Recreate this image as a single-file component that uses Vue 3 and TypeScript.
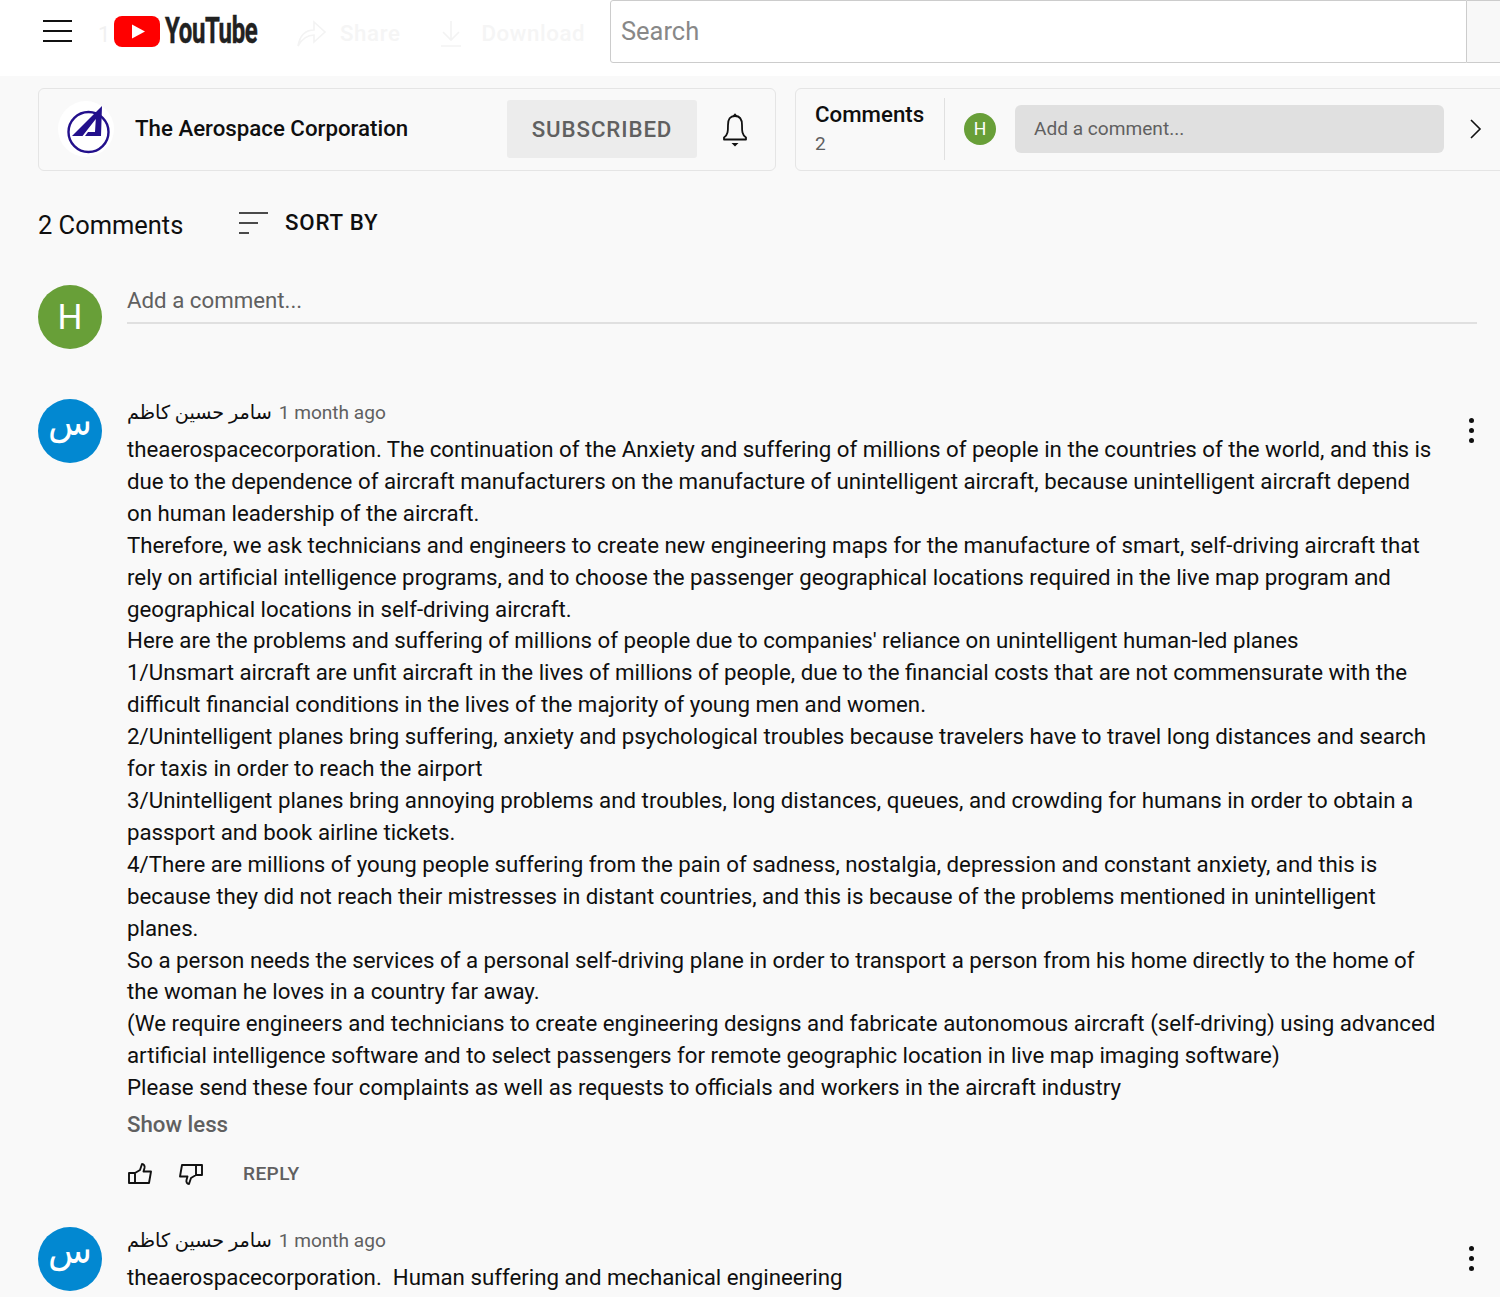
<script setup lang="ts">
interface Comment {
  id: number
  author: string
  age: string
  lines: string[]
  expanded: boolean
}

const comments: Comment[] = [
  {
    id: 1,
    author: 'سامر حسين كاظم',
    age: '1 month ago',
    expanded: true,
    lines: [
      'theaerospacecorporation. The continuation of the Anxiety and suffering of millions of people in the countries of the world, and this is due to the dependence of aircraft manufacturers on the manufacture of unintelligent aircraft, because unintelligent aircraft depend on human leadership of the aircraft.',
      'Therefore, we ask technicians and engineers to create new engineering maps for the manufacture of smart, self-driving aircraft that rely on artificial intelligence programs, and to choose the passenger geographical locations required in the live map program and geographical locations in self-driving aircraft.',
      "Here are the problems and suffering of millions of people due to companies' reliance on unintelligent human-led planes",
      '1/Unsmart aircraft are unfit aircraft in the lives of millions of people, due to the financial costs that are not commensurate with the difficult financial conditions in the lives of the majority of young men and women.',
      '2/Unintelligent planes bring suffering, anxiety and psychological troubles because travelers have to travel long distances and search for taxis in order to reach the airport',
      '3/Unintelligent planes bring annoying problems and troubles, long distances, queues, and crowding for humans in order to obtain a passport and book airline tickets.',
      '4/There are millions of young people suffering from the pain of sadness, nostalgia, depression and constant anxiety, and this is because they did not reach their mistresses in distant countries, and this is because of the problems mentioned in unintelligent planes.',
      'So a person needs the services of a personal self-driving plane in order to transport a person from his home directly to the home of the woman he loves in a country far away.',
      '(We require engineers and technicians to create engineering designs and fabricate autonomous aircraft (self-driving) using advanced artificial intelligence software and to select passengers for remote geographic location in live map imaging software)',
      'Please send these four complaints as well as requests to officials and workers in the aircraft industry',
    ],
  },
  {
    id: 2,
    author: 'سامر حسين كاظم',
    age: '1 month ago',
    expanded: false,
    lines: ['theaerospacecorporation.\u00a0 Human suffering and mechanical engineering'],
  },
]
</script>

<template>
  <div class="page">
    <header class="topbar">
      <button class="menu" type="button" aria-label="Menu">
        <span></span><span></span><span></span>
      </button>
      <div class="ghost-count">1</div>
      <div class="logo">
        <svg width="46" height="31" viewBox="0 0 46 31">
          <rect width="46" height="31" rx="8" fill="#ff0000" />
          <path d="M18 8.5 L31 15.5 L18 22.5 Z" fill="#fff" />
        </svg>
        <span class="wordmark">YouTube</span>
      </div>
      <div class="ghost-actions">
        <svg width="30" height="28" viewBox="0 0 30 28" fill="none" stroke="#f3f3f3" stroke-width="1.6">
          <path d="M1 27 C3 16 9 11 17 11 V3 L28 13 L17 23 V16 C10 16 5 20 1 27 Z" />
        </svg>
        <span class="ghost-label share">Share</span>
        <svg width="24" height="28" viewBox="0 0 24 28" fill="none" stroke="#f3f3f3" stroke-width="1.6">
          <path d="M12 2 V20 M4 13 L12 21 L20 13 M2 27 H22" />
        </svg>
        <span class="ghost-label download">Download</span>
      </div>
      <div class="search">
        <div class="search-field">Search</div>
        <div class="search-btn"></div>
      </div>
    </header>

    <section class="cards">
      <div class="card channel">
        <div class="channel-logo">
          <svg width="56" height="56" viewBox="0 0 56 56">
            <circle cx="30.5" cy="31" r="20" fill="#fff" stroke="#23108c" stroke-width="2.4" />
            <path d="M14 35 L44 5 L43 35 H27 L30 31 H37 L37.8 18 L24.5 35 Z" fill="#23108c" />
          </svg>
        </div>
        <div class="channel-name">The Aerospace Corporation</div>
        <div class="subscribed">SUBSCRIBED</div>
        <svg class="bell" width="30" height="36" viewBox="0 0 30 36" fill="none" stroke="#111" stroke-width="1.8">
          <path d="M4 26.5 C8 24 8 20 8 14 C8 8 10 5 15 5 C20 5 22 8 22 14 C22 20 22 24 26 26.5 V28.5 H4 Z" stroke-linejoin="round" />
          <path d="M12.5 5 L15 2.2 L17.5 5 Z M11.5 32 H18.5 L15 35.5 Z" fill="#111" stroke="none" />
        </svg>
      </div>
      <div class="card comments-card">
        <div class="comments-summary">
          <div class="summary-title">Comments</div>
          <div class="summary-count">2</div>
        </div>
        <div class="avatar avatar-xs green">H</div>
        <div class="fake-input">Add a comment...</div>
        <svg class="chevron" width="14" height="22" viewBox="0 0 14 22" fill="none" stroke="#111" stroke-width="1.6">
          <path d="M2 2 L11 11 L2 20" />
        </svg>
      </div>
    </section>

    <section class="sort-row">
      <h2 class="count">2 Comments</h2>
      <svg class="sort-icon" width="30" height="24" viewBox="0 0 30 24" stroke="#111" stroke-width="1.6">
        <path d="M1 2 H30 M1 12 H20 M1 22 H11" />
      </svg>
      <span class="sort-label">SORT BY</span>
    </section>

    <section class="compose">
      <div class="avatar green">H</div>
      <div class="compose-input">Add a comment...</div>
    </section>

    <article v-for="c in comments" :key="c.id" class="comment">
      <div class="avatar blue"><span>س</span></div>
      <div class="comment-main">
        <div class="comment-head">
          <span class="author">{{ c.author }}</span>
          <span class="age">{{ c.age }}</span>
        </div>
        <div class="comment-body">
          <div v-for="(line, i) in c.lines" :key="i">{{ line }}</div>
        </div>
        <template v-if="c.expanded">
          <div class="show-less">Show less</div>
          <div class="actions">
            <svg width="26" height="22" viewBox="0 0 26 22" fill="none" stroke="#111" stroke-width="1.9" stroke-linejoin="round">
              <path d="M2 10 H8 V20 H2 Z M8 10 L13 7 L15 1 C17 1 18 3 17.5 5 L16.5 8.5 H24 L22 20 H8" />
            </svg>
            <svg class="down" width="26" height="22" viewBox="0 0 26 22" fill="none" stroke="#111" stroke-width="1.9" stroke-linejoin="round">
              <path d="M24 12 H18 V2 H24 Z M18 12 L13 15 L11 21 C9 21 8 19 8.5 17 L9.5 13.5 H2 L4 2 H18" />
            </svg>
            <span class="reply">REPLY</span>
          </div>
        </template>
      </div>
      <div class="more" aria-label="More"><i></i><i></i><i></i></div>
    </article>
  </div>
</template>

<style>
html,
body {
  margin: 0;
  background: #f9f9f9;
  overflow: hidden;
}
</style>

<style scoped>
.page {
  width: 1500px;
  height: 1297px;
  overflow: hidden;
  background: #f9f9f9;
  color: #0f0f0f;
  font-family: Roboto, "Noto Sans", "DejaVu Sans", sans-serif;
}

.topbar {
  height: 76px;
  background: #fff;
  display: flex;
  align-items: flex-start;
}

.menu {
  width: 29px;
  height: 22px;
  margin: 20px 0 0 43px;
  padding: 0;
  border: 0;
  background: none;
  display: flex;
  flex-direction: column;
  justify-content: space-between;
}

.menu span {
  display: block;
  height: 2px;
  background: #111;
}

.ghost-count {
  width: 16px;
  margin: 22px 0 0 26px;
  font-size: 22px;
  color: #f1f1f1;
}

.logo {
  display: flex;
  align-items: center;
  gap: 5px;
  width: 183px;
  margin-top: 16px;
}

.logo svg {
  flex-shrink: 0;
}

.wordmark {
  display: inline-block;
  width: 92px;
  white-space: nowrap;
  font-size: 36px;
  line-height: 31px;
  font-weight: 700;
  letter-spacing: -0.5px;
  color: #212121;
  -webkit-text-stroke: 0.5px #212121;
  transform: scaleX(0.665);
  transform-origin: left center;
}

.ghost-actions {
  display: flex;
  align-items: center;
  width: 313px;
  margin-top: 19px;
}

.ghost-label {
  font-size: 22.28px;
  font-weight: 500;
  letter-spacing: 0.6px;
  color: #f5f5f5;
}

.ghost-label.share {
  margin: 0 39px 0 13px;
}

.ghost-label.download {
  margin-left: 18px;
}

.search {
  width: 890px;
  height: 63px;
  display: flex;
}

.search-field {
  width: 857px;
  box-sizing: border-box;
  border: 1px solid #ccc;
  border-radius: 3px 0 0 3px;
  padding: 0 10px;
  font-size: 25.45px;
  line-height: 60px;
  color: #888;
}

.search-btn {
  flex: 1;
  background: #f8f8f8;
  border-bottom: 1px solid #ccc;
  border-top: 1px solid #ccc;
}

.cards {
  display: flex;
  gap: 19px;
  padding: 12px 0 0 38px;
}

.card {
  box-sizing: border-box;
  height: 83px;
  padding-bottom: 2px;
  border: 1px solid #e5e5e5;
  border-radius: 6px;
  display: flex;
  align-items: center;
}

.channel {
  width: 738px;
  flex-shrink: 0;
}

.channel-logo {
  width: 56px;
  height: 56px;
  margin-left: 19px;
  flex-shrink: 0;
  border-radius: 50%;
  background: #fff;
  display: flex;
}

.channel-name {
  width: 372px;
  margin: -2px 0 0 21px;
  font-size: 22.28px;
  font-weight: 500;
}

.subscribed {
  width: 190px;
  height: 58px;
  border-radius: 3px;
  background: #ececec;
  color: #606060;
  font-size: 22.28px;
  font-weight: 500;
  letter-spacing: 0.9px;
  line-height: 58px;
  text-align: center;
}

.bell {
  margin-left: 23px;
}

.comments-card {
  flex: 1;
  margin-right: -20px;
}

.comments-summary {
  box-sizing: border-box;
  width: 149px;
  height: 62px;
  padding-left: 19px;
  border-right: 1px solid #e0e0e0;
}

.summary-title {
  margin-top: 1px;
  font-size: 22.28px;
  font-weight: 500;
  line-height: 30px;
}

.summary-count {
  margin-top: 2px;
  font-size: 19.1px;
  line-height: 26px;
  color: #606060;
}

.avatar {
  width: 64px;
  height: 64px;
  flex-shrink: 0;
  border-radius: 50%;
  color: #fff;
  display: flex;
  align-items: center;
  justify-content: center;
  font-size: 35px;
}

.avatar.green {
  background: #689f38;
}

.avatar.blue {
  background: #0288d1;
  font-size: 36px;
  font-family: "DejaVu Sans", sans-serif;
}

.avatar.blue span {
  margin-bottom: 18px;
}

.avatar-xs {
  width: 32px;
  height: 32px;
  margin-left: 19px;
  font-size: 17.6px;
}

.fake-input {
  width: 429px;
  height: 48px;
  margin-left: 19px;
  padding-left: 19px;
  box-sizing: border-box;
  border-radius: 6px;
  background: #e0e0e0;
  color: #606060;
  font-size: 19.1px;
  line-height: 47px;
}

.chevron {
  margin-left: 25px;
}

.sort-row {
  display: flex;
  align-items: flex-start;
  padding: 38px 0 0 38px;
  height: 76px;
  box-sizing: content-box;
}

.count {
  margin: 0;
  width: 200px;
  font-size: 25.45px;
  font-weight: 400;
  line-height: 32px;
}

.sort-icon {
  margin-top: 2px;
}

.sort-label {
  margin-left: 17px;
  font-size: 22.28px;
  font-weight: 500;
  letter-spacing: 0.8px;
  line-height: 26px;
}

.compose {
  display: flex;
  gap: 25px;
  padding-left: 38px;
  height: 114px;
}

.compose-input {
  width: 1350px;
  height: 37px;
  border-bottom: 2px solid #e0e0e0;
  font-size: 22.28px;
  line-height: 30px;
  color: #606060;
}

.comment {
  display: flex;
  gap: 25px;
  padding-left: 38px;
  margin-bottom: 37px;
  position: relative;
}

.comment-main {
  width: 1312px;
}

.comment-head {
  display: flex;
  align-items: baseline;
  gap: 7px;
  height: 27px;
  font-size: 19.2px;
  line-height: 27px;
}

.age {
  font-size: 19.1px;
  color: #606060;
}

.comment-body {
  margin-top: 8px;
  font-size: 22.28px;
  line-height: 31.9px;
}

.show-less {
  margin-top: 4px;
  font-size: 22.28px;
  font-weight: 500;
  line-height: 32px;
  color: #606060;
}

.actions {
  display: flex;
  align-items: center;
  height: 32px;
  margin-top: 18px;
}

.actions .down {
  margin-left: 25px;
}

.reply {
  margin: -2px 0 0 39px;
  font-size: 19.1px;
  font-weight: 500;
  letter-spacing: 0.4px;
  color: #606060;
}

.more {
  position: absolute;
  top: 19px;
  right: 26px;
  display: flex;
  flex-direction: column;
  gap: 5px;
}

.more i {
  display: block;
  width: 5px;
  height: 5px;
  border-radius: 50%;
  background: #111;
}
</style>
